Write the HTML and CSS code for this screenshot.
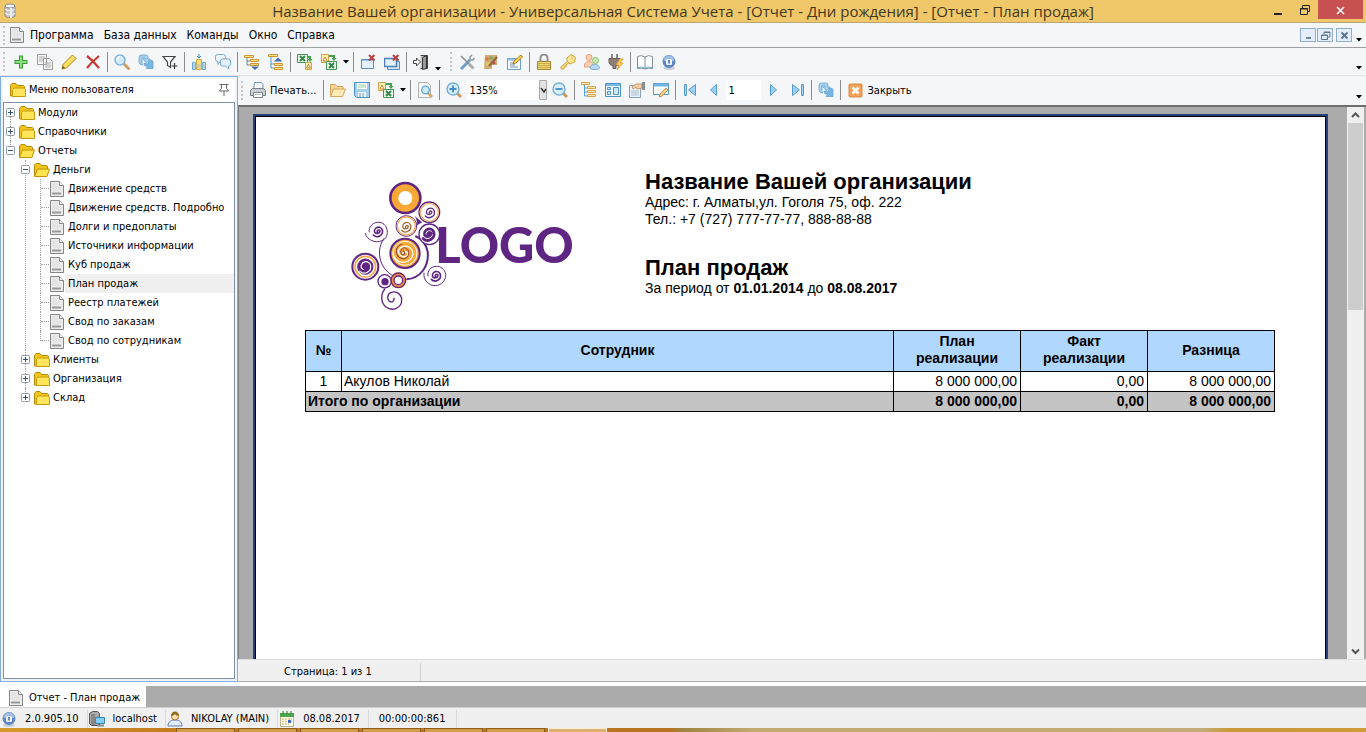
FILE: index.html
```html
<!DOCTYPE html>
<html lang="ru">
<head>
    <meta charset="utf-8" />
    <meta name="viewport" content="width=device-width, initial-scale=1" />
    <title>Отчет - План продаж</title>
    <link rel="stylesheet" href="styles.css">
</head>
<body>
    <svg class="sprite" aria-hidden="true">
        <symbol id="db" viewBox="0 0 16 16"><path d="M3 3v10c1 2 9 2 10 0V3z" fill="#c9c9cd" stroke="#8b8b90"/><ellipse cx="8" cy="3" rx="5" ry="2" fill="#f4f4f6" stroke="#8b8b90"/><path d="M3 6c1 2 9 2 10 0M3 10c1 2 9 2 10 0" fill="none" stroke="#fff"/><path d="M9 5v10" stroke="#eee" stroke-width="2"/></symbol>
        <symbol id="doc" viewBox="0 0 16 16"><path d="M1.500.500h9l4 4v11h-13z" fill="#ededed" stroke="#858585"/><path d="M10.500.500v4h4" fill="#fff" stroke="#858585"/><path d="M3 3h6M3 5h6M3 7h9M3 9h9" stroke="#dcdcdc"/><path d="M3 12.500h9" stroke="#999" stroke-width="2"/></symbol>
        <symbol id="folder" viewBox="0 0 16 16"><path d="M.5 14V3.500l1.500-2h4l1.500 2h6l1 1V14z" fill="#f3c51c" stroke="#b38a08"/><path d="M2.500 14.500V7.500l1.500-1.500h10l1.500 1v7.500z" fill="#ffe55c" stroke="#c79a0c"/></symbol>
        <symbol id="folder-open" viewBox="0 0 16 16"><path d="M.5 14V3l1.500-1.500h4l1.500 2h5l1 1V8" fill="#f3c51c" stroke="#b38a08"/><path d="M.5 14.500l3-7.500h12l-2.500 7.500z" fill="#ffe34f" stroke="#c0930a"/></symbol>
        <symbol id="plus" viewBox="0 0 16 16"><path d="M8 1.500v13M1.500 8h13" stroke="#3a9a35" stroke-width="4"/><path d="M8 2.500v11M2.500 8h11" stroke="#8be07c" stroke-width="2"/></symbol>
        <symbol id="copy" viewBox="0 0 16 16"><path d="M.5.500h9v10h-9zM6.500 4.500h6l3 3v8h-9z" fill="#f8f8f8" stroke="#9b9b9b"/><path d="M2 3h6M2 5h4M2 7h4M8 9h6M8 11h6M8 13h6" stroke="#a9a9a9"/></symbol>
        <symbol id="pencil" viewBox="0 0 16 16"><path d="M1 15l1-4.500L11.500 1 15 4.500 5.500 14z" fill="#ffd84e" stroke="#b08a28"/><path d="M3.500 12L13 2.500" stroke="#fff2b0"/><path d="M1 15l1-3 2 2z" fill="#555"/></symbol>
        <symbol id="cross" viewBox="0 0 16 16"><path d="M2 2c4 3 8 7 12 12M14 2C9 6 5 10 2 14" fill="none" stroke="#c33a36" stroke-width="2.200"/></symbol>
        <symbol id="search" viewBox="0 0 16 16"><path d="M9.500 9.500l5 5" stroke="#cf9e62" stroke-width="3" stroke-linecap="round"/><circle cx="6" cy="6" r="5" fill="#d3ecfb" stroke="#7fb4dc" stroke-width="1.500"/><path d="M3 6a3 3 0 013-3" fill="none" stroke="#fff" stroke-width="1.500"/></symbol>
        <symbol id="refresh" viewBox="0 0 16 16"><path d="M1 8V3.500Q1 1 3.500 1H8q2 0 2 2v2h2L8.500 9 5 5h2V4H4v4q0 2 1 3-4 0-4-3z" fill="#a5d0ef" stroke="#67a5d4" stroke-width=".8"/><path d="M15 8v6.500H8L10 12H7l-1-3 4 1 1-3 1-1q3 0 3 2z" fill="#78b6e3" stroke="#67a5d4" stroke-width=".8"/></symbol>
        <symbol id="filter" viewBox="0 0 16 16"><path d="M1 2.500h12L8.500 8v5.500l-3-2V8z" fill="#fff" stroke="#444" stroke-width="1.200"/><path d="M12.500 9v6M9.500 12h6" stroke="#333" stroke-width="1.200"/></symbol>
        <symbol id="columns" viewBox="0 0 16 16"><path d="M1.500 8.500h3v7h-3zM11.500 8.500h3v7h-3z" fill="#c6e4f8" stroke="#69a5cf"/><path d="M5.500 5.500h5v10h-5z" fill="#ffe07a" stroke="#d0a83c"/><path d="M2 11h12M2 13h12" stroke="#a5bcca"/><path d="M8 0v4M6 2l2 2 2-2" fill="none" stroke="#3b89c4"/></symbol>
        <symbol id="chat" viewBox="0 0 16 16"><path d="M.5 2.500q0-2 2-2h6q2 0 2 2v3q0 2-2 2H5l-2 3v-3q-2.500 0-2.500-2z" fill="#edf6fc" stroke="#79a9cb"/><path d="M5.500 7q0-2 2-2h6q2 0 2 2v3q0 2-2 2v3l-3-3h-3q-2 0-2-2z" fill="#e3f1fb" stroke="#79a9cb"/></symbol>
        <symbol id="expand" viewBox="0 0 16 16"><path d="M3 3v8h4M3 7h3" fill="none" stroke="#6a86a0"/><path d="M.5 1.500h9v2h-9zM6.500 5.500h8v2h-8zM6.500 9.500h8v2h-8z" fill="#ffe08b" stroke="#cc9637"/><path d="M7 12.500h8l-4 3.500z" fill="#496fae"/></symbol>
        <symbol id="collapse" viewBox="0 0 16 16"><path d="M3 3v11h3M3 10h3" fill="none" stroke="#4f9bcd"/><path d="M.5.500h9v2h-9z" fill="#ffe08b" stroke="#cc9637"/><path d="M6 7.500L10 3.500l4.500 4z" fill="#496fae"/><path d="M6.500 9.500h8v2h-8zM6.500 13.500h8v2h-8z" fill="#ffe08b" stroke="#cc9637"/></symbol>
        <symbol id="xls-out" viewBox="0 0 16 16"><path d="M.5.500h10v8h-10z" fill="#eef9ea" stroke="#46945a"/><path d="M3 2l5 5M8 2L3 7" stroke="#31854a" stroke-width="2"/><path d="M11 3h2v3" fill="none" stroke="#45a04e" stroke-width="2"/><path d="M10.500 5h5L13 8z" fill="#45a04e"/><path d="M8.500 8.500h6v7h-6z" fill="#fff1b5" stroke="#cfa349"/><path d="M9.500 14l2-4 2 4z" fill="#fff" stroke="#c88a24"/></symbol>
        <symbol id="xls-in" viewBox="0 0 16 16"><path d="M.5.500h7v8h-7z" fill="#fff1b5" stroke="#cfa349"/><path d="M2 7l2-4 2 4z" fill="#fff" stroke="#c88a24"/><path d="M8 2h5v3" fill="none" stroke="#45a04e" stroke-width="2"/><path d="M10.500 4h5L13 7z" fill="#45a04e"/><path d="M5.500 7.500h10v8h-10z" fill="#eef9ea" stroke="#46945a"/><path d="M8 9l5 5M13 9l-5 5" stroke="#31854a" stroke-width="2"/></symbol>
        <symbol id="win-close" viewBox="0 0 16 16"><path d="M1.500 5.500h12v9h-12z" fill="#e2f1fc" stroke="#5c8dbf"/><path d="M2 6.500h11" stroke="#94c3e8"/><path d="M9 1l5.500 5.500M14.500 1L9 6.500" stroke="#b83f3f" stroke-width="2"/></symbol>
        <symbol id="wins-close" viewBox="0 0 16 16"><path d="M3.500 7.500h12v8h-12z" fill="#cfe6f8" stroke="#5c8dbf"/><path d="M.5 4.500h12v8H.5z" fill="#e2f1fc" stroke="#4d7fb5" stroke-width="1.500"/><path d="M9 1l5.500 5.500M14.500 1L9 6.500" stroke="#b83f3f" stroke-width="2"/></symbol>
        <symbol id="exit" viewBox="0 0 16 16"><path d="M7.500 1.500h7v13h-7" fill="#ccc" stroke="#444"/><path d="M9.500 3.500l4-2v13l-4 1z" fill="#999" stroke="#333"/><path d="M.5 6.500h3V4l4 4-4 4V9.500h-3z" fill="#fff" stroke="#444"/></symbol>
        <symbol id="tools" viewBox="0 0 16 16"><path d="M2 15L11 6" stroke="#6f9fcb" stroke-width="3"/><path d="M11 6V3l2-2M11 6h3l1.500-2" fill="none" stroke="#8f979f" stroke-width="1.500"/><path d="M2 2l9 9" stroke="#858c94" stroke-width="1.500"/><path d="M10 10l4.500 4.500" stroke="#a8adb3" stroke-width="3"/></symbol>
        <symbol id="palette" viewBox="0 0 16 16"><path d="M2 1h12v10H9v4H1z" fill="#d0ae7c"/><circle cx="4" cy="5" r="2" fill="#da7c42"/><circle cx="8" cy="4" r="2" fill="#8fa860"/><circle cx="5" cy="10" r="2" fill="#e6cb55"/><path d="M6 12l8-9" stroke="#94603c" stroke-width="2"/><circle cx="11" cy="9" r="1.500" fill="#c0564a"/></symbol>
        <symbol id="form-edit" viewBox="0 0 16 16"><path d="M.5 4.500h13v11H.5z" fill="#f4faff" stroke="#6d9dcd"/><path d="M1 5.500h12" stroke="#8dbbe4" stroke-width="2"/><path d="M3 9h3M3 11h5M3 13h8" stroke="#7a94b4"/><path d="M6 10l1-3 7-6 1.500 2-6.500 6z" fill="#ffd44c" stroke="#a98326"/></symbol>
        <symbol id="lock" viewBox="0 0 16 16"><path d="M4.500 8V4a3.500 3.500 0 017 0v4" fill="none" stroke="#92928c" stroke-width="2"/><path d="M1.500 7.500h13v8h-13z" fill="#ecd272" stroke="#a58835"/><path d="M2 9.500h12M2 11.500h12M2 13.500h12" stroke="#d0ae48"/></symbol>
        <symbol id="key" viewBox="0 0 16 16"><path d="M8 7l-7 6v2h3v-2h2v-2l4-3z" fill="#ffe07a" stroke="#cfa23c"/><path d="M7 4l4-3.500 4.500 3-1 4.500-4.500 2-3-3z" fill="#ffe694" stroke="#cfa23c"/><circle cx="12" cy="4" r="1" fill="#fff" stroke="#cfa23c" stroke-width=".5"/></symbol>
        <symbol id="users" viewBox="0 0 16 16"><circle cx="5" cy="3.500" r="3" fill="#ffd1b2" stroke="#e8a07c"/><path d="M.5 11c0-4 8-5 9 0v2h-9z" fill="#ffd1b2" stroke="#e8a07c"/><circle cx="11.500" cy="6.500" r="3" fill="#c4e8ae" stroke="#8cc272"/><path d="M6 14c0-5 9-5 9.500 0l-2 1.500H8z" fill="#b8d8f4" stroke="#7cabd4"/></symbol>
        <symbol id="power" viewBox="0 0 16 16"><path d="M4 0v5M9 0v5" stroke="#888" stroke-width="2"/><path d="M1 4.500h11v3c0 3-2 4-4 4v3H5v-3c-3 0-4-2-4-4z" fill="#8d8079" stroke="#6d5d56"/><path d="M12 5l-4 6h3l-2 5 6-7h-3l3-4z" fill="#ffd65a" stroke="#d9962b" stroke-width=".8"/></symbol>
        <symbol id="book" viewBox="0 0 16 16"><path d="M.5 2.500q4-2 7.500.5 3.500-2.500 7.500-.5v12q-4-1-7.500.5-3.500-1.500-7.500-.5z" fill="#fff" stroke="#7f8f9b"/><path d="M8 3v12" stroke="#7f8f9b"/><path d="M1 13.500q4-1 7 .5 3-1.500 7-.5" fill="none" stroke="#70aad5"/></symbol>
        <symbol id="info" viewBox="0 0 16 16"><ellipse cx="8" cy="14" rx="6" ry="2" fill="#c9d0da"/><circle cx="8" cy="7.500" r="6.500" fill="#5d86c2"/><path d="M2.500 6a5.500 4.500 0 0111 0c-1 2-10 2-11 0z" fill="#9fbce4"/><rect x="5" y="5" width="6" height="6" rx="1.500" fill="#eef4fc"/><path d="M8 6v3.500" stroke="#41659c" stroke-width="1.500"/></symbol>
        <symbol id="printer" viewBox="0 0 16 16"><path d="M3.500 8l1-7.500h7l1.500 2V8" fill="#f4f9fd" stroke="#6f9ac0"/><path d="M.5 8.500l2-2h11l2 2v5H.5z" fill="#c9ced4" stroke="#777f88"/><path d="M3.500 10.500h9v5h-9z" fill="#fff" stroke="#7e8790"/><path d="M5 12.500h6" stroke="#b8c2ca"/></symbol>
        <symbol id="open" viewBox="0 0 16 16"><path d="M.5 13.500v-11h5l1.500 2h6V7" fill="#f8d596" stroke="#d7a55c"/><path d="M.5 14.500l3-7.500h12l-3 7.500z" fill="#ffebb8" stroke="#d7a55c"/></symbol>
        <symbol id="save" viewBox="0 0 16 16"><path d="M.5.500h15v15H2.500l-2-2z" fill="#a3d0f1" stroke="#4b93c9"/><path d="M3 1h10v6H3z" fill="#fff"/><path d="M4 3h8M4 5h8" stroke="#9accA0"/><path d="M4 10h8v5H4z" fill="#eef5fa"/><path d="M6 11v4M9 11v4" stroke="#6f9abc"/></symbol>
        <symbol id="preview" viewBox="0 0 16 16"><path d="M1.500.500h9l3 3v12h-12z" fill="#fafafa" stroke="#b4b4b4"/><path d="M11 11l4 4" stroke="#d6a768" stroke-width="2.500"/><circle cx="8.500" cy="8" r="3.800" fill="#cdebfa" stroke="#60a4d0" stroke-width="1.300"/></symbol>
        <symbol id="zoom-in" viewBox="0 0 16 16"><path d="M11 11l4 4" stroke="#c99a5e" stroke-width="3"/><circle cx="7" cy="7" r="6" fill="#d8effc" stroke="#7aafd6" stroke-width="1.500"/><path d="M7 3.500v7M3.500 7h7" stroke="#3f8ec2" stroke-width="1.800"/></symbol>
        <symbol id="zoom-out" viewBox="0 0 16 16"><path d="M11 11l4 4" stroke="#c99a5e" stroke-width="3"/><circle cx="7" cy="7" r="6" fill="#d8effc" stroke="#7aafd6" stroke-width="1.500"/><path d="M3.500 7h7" stroke="#3f8ec2" stroke-width="1.800"/></symbol>
        <symbol id="outline" viewBox="0 0 16 16"><path d="M3.500 3v11h4M4 6h3M4 10h3" fill="none" stroke="#54a2cd"/><path d="M.5.500h8v2h-8zM6.500 4.500h8v2h-8zM6.500 8.500h8v2h-8zM6.500 12.500h8v2h-8z" fill="#ffe9a8" stroke="#d7a34c"/></symbol>
        <symbol id="thumbs" viewBox="0 0 16 16"><path d="M.5 1.500h15v13H.5z" fill="#eff8fe" stroke="#4b93c9"/><path d="M1 3h14" stroke="#7cb8e4" stroke-width="2"/><path d="M2.500 5.500h3v2h-3zM2.500 9.500h3v3h-3zM8.500 5.500h5v7h-5z" fill="#cfe8f9" stroke="#5195c8"/></symbol>
        <symbol id="page-setup" viewBox="0 0 16 16"><path d="M.5 3.500h11v12H.5z" fill="#eaf2f9" stroke="#8a9eb3"/><path d="M2 9h8M2 11h8M2 13h8" stroke="#a8bbcc"/><path d="M3 5l4-3 6 0v4l-5 1-1-2-3 2z" fill="#f8d0a5" stroke="#c99a6b"/><path d="M13 0h3v8h-3z" fill="#868d96"/></symbol>
        <symbol id="page-edit" viewBox="0 0 16 16"><path d="M.5 1.500h15v11H.5z" fill="#fafdff" stroke="#559ac8"/><path d="M1 3h14" stroke="#71b5e4" stroke-width="3"/><path d="M6 15l1-3 6-6 2 2-6 6z" fill="#ffd08a" stroke="#c08f4c"/></symbol>
        <symbol id="first" viewBox="0 0 16 16"><path d="M2.500 2.500h2v11h-2zM13.500 2.500v11L6.500 8z" fill="#9ad0f4" stroke="#5a9bcb"/></symbol>
        <symbol id="prev" viewBox="0 0 16 16"><path d="M10.500 2.500v11L4.500 8z" fill="#9ad0f4" stroke="#5a9bcb"/></symbol>
        <symbol id="next" viewBox="0 0 16 16"><path d="M5.500 2.500v11l6-5.500z" fill="#9ad0f4" stroke="#5a9bcb"/></symbol>
        <symbol id="last" viewBox="0 0 16 16"><path d="M12.500 2.500h2v11h-2zM3.500 2.500v11l7-5.500z" fill="#9ad0f4" stroke="#5a9bcb"/></symbol>
        <symbol id="close-orange" viewBox="0 0 16 16"><rect x="2" y="2" width="13" height="13" rx="1" fill="#f0a058" stroke="#dc8a42"/><path d="M5.500 5.500l6 6M11.500 5.500l-6 6" stroke="#fff" stroke-width="2.500"/></symbol>
        <symbol id="pin" viewBox="0 0 12 16"><path d="M1.500 2.500h9M3.500 3v3.500L1.500 9h9l-2-2.500V3M6 9v5" fill="none" stroke="#666"/></symbol>
        <symbol id="server" viewBox="0 0 16 16"><path d="M.5 2.500l3-2h5l2 2v12h-8l-2-2z" fill="#a9a9a9" stroke="#555"/><path d="M3 3v11M5 3v11" stroke="#666"/><path d="M6.500 6.500h9v6h-9z" fill="#7fd0f5" stroke="#3884b0"/><path d="M8 14.500h7" stroke="#8a8a8a" stroke-width="2"/></symbol>
        <symbol id="user" viewBox="0 0 16 16"><path d="M1 15c0-5 4-6 7-6s7 1 7 6z" fill="#e4ecfb" stroke="#5e7fb4"/><circle cx="8" cy="5.500" r="3.500" fill="#ffe0b0" stroke="#a8762d"/><path d="M4 5c0-6 8-6 8 0-2 0-3-1-4-2-1 1-2 2-4 2z" fill="#96691f"/></symbol>
        <symbol id="calendar" viewBox="0 0 16 16"><path d="M1.500 2.500h13v13h-13z" fill="#fffef0" stroke="#b9b28a"/><path d="M1 2h14v4H1z" fill="#4ca64a"/><path d="M4 0v3M8 0v3M12 0v3" stroke="#2c7a2c"/><path d="M3 8h10M3 10.500h10M3 13h7" stroke="#d8c77c" stroke-dasharray="2 1" stroke-width="1.500"/><path d="M9 9h3v3H9z" fill="#3d6cc0"/></symbol>
        <symbol id="exp-plus" viewBox="0 0 9 9"><rect x=".5" y=".5" width="8" height="8" rx="1" fill="#fff" stroke="#8f9aa8"/><path d="M2 4.500h5M4.500 2v5" stroke="#34507e"/></symbol>
        <symbol id="exp-minus" viewBox="0 0 9 9"><rect x=".5" y=".5" width="8" height="8" rx="1" fill="#fff" stroke="#8f9aa8"/><path d="M2 4.500h5" stroke="#34507e"/></symbol>
        <symbol id="arrow" viewBox="0 0 6 4"><path d="M0 0h6L3 3.500z" fill="#000"/></symbol>
        <symbol id="min" viewBox="0 0 13 13"><path d="M4 9h5" stroke="#6d86a0" stroke-width="2"/></symbol>
        <symbol id="restore" viewBox="0 0 13 13"><path d="M5 5V3h6v5H9M2.500 6h6v4.500h-6zM5 3.500h6M2.500 6.500h6" fill="none" stroke="#5d7690"/></symbol>
        <symbol id="mdi-x" viewBox="0 0 13 13"><path d="M3.500 3.500l6 6M9.500 3.500l-6 6" stroke="#5d7690" stroke-width="2"/></symbol>
    </svg>

    <header class="titlebar">
        <svg class="icon app-icon"><use href="#db"/></svg>
        <h1>Название Вашей организации - Универсальная Система Учета - [Отчет - Дни рождения] - [Отчет - План продаж]</h1>
        <div class="window-buttons">
            <button aria-label="Свернуть"><svg width="10" height="12"><path d="M1 10h8" stroke="#222" stroke-width="2"/></svg></button>
            <button aria-label="Восстановить"><svg width="10" height="12"><path d="M.5 4.500h7v6h-7zM.5 5h7M2.500 4V1.500h7v6H8" fill="none" stroke="#222"/></svg></button>
            <button class="close" aria-label="Закрыть окно"><svg width="10" height="12"><path d="M1 3l7 7M8 3l-7 7" stroke="#fff" stroke-width="1.500"/></svg></button>
        </div>
    </header>

    <nav class="menubar">
        <span class="grip"></span>
        <svg class="icon"><use href="#doc"/></svg>
        <button>Программа</button>
        <button>База данных</button>
        <button>Команды</button>
        <button>Окно</button>
        <button>Справка</button>
        <div class="mdi-buttons">
            <button aria-label="Свернуть отчет"><svg><use href="#min"/></svg></button>
            <button aria-label="Восстановить отчет"><svg><use href="#restore"/></svg></button>
            <button class="mdi-close" aria-label="Закрыть отчет"><svg><use href="#mdi-x"/></svg></button>
        </div>
        <button class="overflow" aria-label="Настройка меню"><svg><use href="#arrow"/></svg></button>
    </nav>

    <div class="toolbar main-toolbar">
        <span class="grip"></span>
        <button class="tool" aria-label="Добавить"><svg class="icon"><use href="#plus"/></svg></button>
        <button class="tool" aria-label="Копировать"><svg class="icon"><use href="#copy"/></svg></button>
        <button class="tool" aria-label="Изменить"><svg class="icon"><use href="#pencil"/></svg></button>
        <button class="tool" aria-label="Удалить"><svg class="icon"><use href="#cross"/></svg></button>
        <span class="sep"></span>
        <button class="tool" aria-label="Поиск"><svg class="icon"><use href="#search"/></svg></button>
        <button class="tool" aria-label="Обновить"><svg class="icon"><use href="#refresh"/></svg></button>
        <button class="tool" aria-label="Фильтр"><svg class="icon"><use href="#filter"/></svg></button>
        <span class="sep"></span>
        <button class="tool" aria-label="Колонки"><svg class="icon"><use href="#columns"/></svg></button>
        <button class="tool" aria-label="Примечания"><svg class="icon"><use href="#chat"/></svg></button>
        <span class="sep"></span>
        <button class="tool" aria-label="Развернуть все"><svg class="icon"><use href="#expand"/></svg></button>
        <button class="tool" aria-label="Свернуть все"><svg class="icon"><use href="#collapse"/></svg></button>
        <span class="sep"></span>
        <button class="tool" aria-label="Импорт"><svg class="icon"><use href="#xls-out"/></svg></button>
        <button class="tool" aria-label="Экспорт"><svg class="icon"><use href="#xls-in"/></svg></button>
        <button class="drop" aria-label="Варианты экспорта"><svg><use href="#arrow"/></svg></button>
        <span class="sep"></span>
        <button class="tool" aria-label="Закрыть окно отчета"><svg class="icon"><use href="#win-close"/></svg></button>
        <button class="tool" aria-label="Закрыть все окна"><svg class="icon"><use href="#wins-close"/></svg></button>
        <span class="sep"></span>
        <button class="tool" aria-label="Выход"><svg class="icon"><use href="#exit"/></svg></button>
        <button class="drop low" aria-label="Кнопки панели"><svg><use href="#arrow"/></svg></button>
        <span class="grip"></span>
        <button class="tool" aria-label="Настройки"><svg class="icon"><use href="#tools"/></svg></button>
        <button class="tool" aria-label="Оформление"><svg class="icon"><use href="#palette"/></svg></button>
        <button class="tool" aria-label="Редактор форм"><svg class="icon"><use href="#form-edit"/></svg></button>
        <span class="sep"></span>
        <button class="tool" aria-label="Блокировка"><svg class="icon"><use href="#lock"/></svg></button>
        <button class="tool" aria-label="Пароль"><svg class="icon"><use href="#key"/></svg></button>
        <button class="tool" aria-label="Пользователи"><svg class="icon"><use href="#users"/></svg></button>
        <button class="tool" aria-label="Подключения"><svg class="icon"><use href="#power"/></svg></button>
        <span class="sep"></span>
        <button class="tool" aria-label="Справочник"><svg class="icon"><use href="#book"/></svg></button>
        <button class="tool" aria-label="О программе"><svg class="icon"><use href="#info"/></svg></button>
        <button class="overflow" aria-label="Настройка панели"><svg><use href="#arrow"/></svg></button>
    </div>

    <main>
        <aside class="side-panel">
            <div class="panel-title">
                <svg class="icon"><use href="#folder"/></svg>
                <h2>Меню пользователя</h2>
                <button aria-label="Закрепить"><svg class="pin"><use href="#pin"/></svg></button>
            </div>
            <div class="tree-box">
                <ul class="tree">
                    <li><div class="row"><button class="expander" aria-label="Раскрыть Модули"><svg><use href="#exp-plus"/></svg></button><svg class="icon"><use href="#folder"/></svg><span>Модули</span></div></li>
                    <li><div class="row"><button class="expander" aria-label="Раскрыть Справочники"><svg><use href="#exp-plus"/></svg></button><svg class="icon"><use href="#folder"/></svg><span>Справочники</span></div></li>
                    <li>
                        <div class="row"><button class="expander" aria-label="Свернуть Отчеты"><svg><use href="#exp-minus"/></svg></button><svg class="icon"><use href="#folder-open"/></svg><span>Отчеты</span></div>
                        <ul>
                            <li>
                                <div class="row"><button class="expander" aria-label="Свернуть Деньги"><svg><use href="#exp-minus"/></svg></button><svg class="icon"><use href="#folder-open"/></svg><span>Деньги</span></div>
                                <ul>
                                    <li><div class="row leaf"><svg class="icon"><use href="#doc"/></svg><span>Движение средств</span></div></li>
                                    <li><div class="row leaf"><svg class="icon"><use href="#doc"/></svg><span>Движение средств. Подробно</span></div></li>
                                    <li><div class="row leaf"><svg class="icon"><use href="#doc"/></svg><span>Долги и предоплаты</span></div></li>
                                    <li><div class="row leaf"><svg class="icon"><use href="#doc"/></svg><span>Источники информации</span></div></li>
                                    <li><div class="row leaf"><svg class="icon"><use href="#doc"/></svg><span>Куб продаж</span></div></li>
                                    <li><div class="row leaf selected"><svg class="icon"><use href="#doc"/></svg><span>План продаж</span></div></li>
                                    <li><div class="row leaf"><svg class="icon"><use href="#doc"/></svg><span>Реестр платежей</span></div></li>
                                    <li><div class="row leaf"><svg class="icon"><use href="#doc"/></svg><span>Свод по заказам</span></div></li>
                                    <li><div class="row leaf"><svg class="icon"><use href="#doc"/></svg><span>Свод по сотрудникам</span></div></li>
                                </ul>
                            </li>
                            <li><div class="row"><button class="expander" aria-label="Раскрыть Клиенты"><svg><use href="#exp-plus"/></svg></button><svg class="icon"><use href="#folder"/></svg><span>Клиенты</span></div></li>
                            <li><div class="row"><button class="expander" aria-label="Раскрыть Организация"><svg><use href="#exp-plus"/></svg></button><svg class="icon"><use href="#folder"/></svg><span>Организация</span></div></li>
                            <li><div class="row"><button class="expander" aria-label="Раскрыть Склад"><svg><use href="#exp-plus"/></svg></button><svg class="icon"><use href="#folder"/></svg><span>Склад</span></div></li>
                        </ul>
                    </li>
                </ul>
            </div>
        </aside>

        <section class="report">
            <div class="toolbar report-toolbar">
                <span class="grip"></span>
                <button class="tool labeled print"><svg class="icon"><use href="#printer"/></svg>Печать...</button>
                <span class="sep"></span>
                <button class="tool" aria-label="Открыть"><svg class="icon"><use href="#open"/></svg></button>
                <button class="tool" aria-label="Сохранить"><svg class="icon"><use href="#save"/></svg></button>
                <button class="tool" aria-label="Экспорт отчета"><svg class="icon"><use href="#xls-in"/></svg></button>
                <button class="drop" aria-label="Форматы экспорта"><svg><use href="#arrow"/></svg></button>
                <span class="sep"></span>
                <button class="tool" aria-label="Найти в отчете"><svg class="icon"><use href="#preview"/></svg></button>
                <span class="sep"></span>
                <button class="tool" aria-label="Увеличить"><svg class="icon"><use href="#zoom-in"/></svg></button>
                <div class="zoom-box">
                    <select aria-label="Масштаб"><option>135%</option><option>100%</option></select>
                    <svg class="zoom-arrow" viewBox="0 0 8 20"><path d="M.5.500h7v19h-7z" fill="#e3e3e3" stroke="#a9a9a9"/><path d="M2 8l3 4 2-3" fill="none" stroke="#333" stroke-width="1.500"/></svg>
                </div>
                <button class="tool" aria-label="Уменьшить"><svg class="icon"><use href="#zoom-out"/></svg></button>
                <span class="sep"></span>
                <button class="tool" aria-label="Структура"><svg class="icon"><use href="#outline"/></svg></button>
                <button class="tool" aria-label="Миниатюры"><svg class="icon"><use href="#thumbs"/></svg></button>
                <button class="tool" aria-label="Параметры страницы"><svg class="icon"><use href="#page-setup"/></svg></button>
                <button class="tool" aria-label="Редактировать страницу"><svg class="icon"><use href="#page-edit"/></svg></button>
                <span class="sep"></span>
                <button class="tool" aria-label="Первая страница"><svg class="icon"><use href="#first"/></svg></button>
                <button class="tool" aria-label="Предыдущая страница"><svg class="icon"><use href="#prev"/></svg></button>
                <input class="page-input" type="text" value="1" aria-label="Номер страницы">
                <button class="tool" aria-label="Следующая страница"><svg class="icon"><use href="#next"/></svg></button>
                <button class="tool" aria-label="Последняя страница"><svg class="icon"><use href="#last"/></svg></button>
                <span class="sep"></span>
                <button class="tool" aria-label="Обновить отчет"><svg class="icon"><use href="#refresh"/></svg></button>
                <span class="sep"></span>
                <button class="tool labeled"><svg class="icon"><use href="#close-orange"/></svg>Закрыть</button>
                <button class="overflow" aria-label="Настройка панели отчета"><svg><use href="#arrow"/></svg></button>
            </div>

            <div class="viewer">
                <div class="canvas">
                    <article class="page">
                        <div class="page-head">
                            <svg class="logo" viewBox="0 0 750 450" role="img" aria-label="LOGO">
                                <defs>
                                    <path id="spiral" d="M-2 2a4 4 0 018-3a9 9 0 01-16 4a12 12 0 0123-7a16 16 0 01-27 15" fill="none" stroke-linecap="round"/>
                                </defs>
                                <g stroke="#5f2583" fill="none">
                                    <path d="M132 205C100 250 125 325 200 328" stroke-width="3"/>
                                    <path d="M200 328C240 325 268 290 263 245 258 220 242 205 226 198" stroke-width="6"/>
                                    <path d="M226 140q8 15 4 26l16-9z" fill="#5f2583"/>
                                    <circle cx="196" cy="84" r="45" fill="#f7a837" stroke-width="8"/>
                                    <circle cx="196" cy="84" r="21" fill="#fff" stroke="none"/>
                                    <circle cx="268" cy="127" r="31" stroke-width="4"/>
                                    <circle cx="268" cy="127" r="27" stroke="#f3b068" stroke-width="4"/>
                                    <use href="#spiral" transform="translate(270 127)" stroke-width="4"/>
                                    <circle cx="199" cy="168" r="31" stroke-width="3"/>
                                    <circle cx="199" cy="168" r="27" stroke="#f3aa58" stroke-width="4"/>
                                    <use href="#spiral" transform="translate(199 170)" stroke="#a36432" stroke-width="4"/>
                                    <circle cx="268" cy="193" r="31" fill="#fff" stroke-width="4"/>
                                    <use href="#spiral" transform="translate(266 192) scale(1.200)" stroke-width="7"/>
                                    <path d="M76 190c3 18 30 32 50 22 24-10 20-50-6-55-20-3-36 14-32 30" stroke-width="3"/>
                                    <use href="#spiral" transform="translate(114 184)" stroke-width="5"/>
                                    <circle cx="195" cy="250" r="44" fill="#f7a837" stroke-width="6"/>
                                    <circle cx="195" cy="250" r="36" stroke="#fff" stroke-width="3"/>
                                    <use href="#spiral" transform="translate(193 250) scale(1.900) rotate(40)" stroke="#fff" stroke-width="2"/>
                                    <use href="#spiral" transform="translate(190 247) scale(1.400) rotate(120)" stroke="#8a4545" stroke-width="2"/>
                                    <circle cx="76" cy="290" r="39" stroke-width="6"/>
                                    <circle cx="76" cy="290" r="31" stroke="#f4a850" stroke-width="5"/>
                                    <circle cx="76" cy="290" r="23" fill="#5f2583" stroke-width="3"/>
                                    <use href="#spiral" transform="translate(76 290) scale(1.200)" stroke="#fff" stroke-width="3"/>
                                    <circle cx="78" cy="290" r="10" fill="#5f2583" stroke="none"/>
                                    <circle cx="134" cy="334" r="20" fill="#fff" stroke-width="4"/>
                                    <circle cx="135" cy="335" r="11" fill="#5f2583" stroke="none"/>
                                    <circle cx="175" cy="331" r="22" fill="#f08f56" stroke="#6b2450" stroke-width="4"/>
                                    <circle cx="175" cy="331" r="13" fill="#fff" stroke-width="4"/>
                                    <path d="M252 308c-3 22 14 40 34 39 20-1 32-18 31-34-2-16-16-25-29-24-17 1-26 14-24 30" stroke-width="3"/>
                                    <use href="#spiral" transform="translate(288 317)" stroke-width="5"/>
                                    <path d="M135 357c-12 12-15 40 3 54 20 15 47 3 47-21 0-19-18-29-33-22-12 6-10 21-4 26 9 5 16-2 14-11" stroke-width="4"/>
                                </g>
                                <text x="286" y="278" class="logo-text">LOGO</text>
                            </svg>
                            <div class="org">
                                <h2>Название Вашей организации</h2>
                                <p>Адрес: г. Алматы,ул. Гоголя 75, оф. 222</p>
                                <p>Тел.: +7 (727) 777-77-77, 888-88-88</p>
                                <h2 class="report-name">План продаж</h2>
                                <p>За период от <b>01.01.2014</b> до <b>08.08.2017</b></p>
                            </div>
                        </div>
                        <table>
                            <colgroup><col class="c-num"><col><col class="c-sum"><col class="c-sum"><col class="c-sum"></colgroup>
                            <thead>
                                <tr><th>№</th><th>Сотрудник</th><th>План реализации</th><th>Факт реализации</th><th>Разница</th></tr>
                            </thead>
                            <tbody>
                                <tr><td class="num">1</td><td>Акулов Николай</td><td class="sum">8 000 000,00</td><td class="sum">0,00</td><td class="sum">8 000 000,00</td></tr>
                            </tbody>
                            <tfoot>
                                <tr><td colspan="2">Итого по организации</td><td class="sum">8 000 000,00</td><td class="sum">0,00</td><td class="sum">8 000 000,00</td></tr>
                            </tfoot>
                        </table>
                    </article>
                </div>
                <div class="scrollbar">
                    <button aria-label="Вверх"><svg width="9" height="7"><path d="M1 5l3.500-3.500L8 5" fill="none" stroke="#555" stroke-width="2"/></svg></button>
                    <div class="thumb"></div>
                    <button class="down" aria-label="Вниз"><svg width="9" height="7"><path d="M1 1.500L4.500 5 8 1.500" fill="none" stroke="#555" stroke-width="2"/></svg></button>
                </div>
            </div>
            <div class="page-status"><span>Страница: 1 из 1</span></div>
        </section>
    </main>

    <div class="tabs">
        <button class="tab"><svg class="icon"><use href="#doc"/></svg>Отчет - План продаж</button>
    </div>

    <footer class="statusbar">
        <span><svg class="icon"><use href="#info"/></svg>2.0.905.10</span>
        <span><svg class="icon"><use href="#server"/></svg>localhost</span>
        <span><svg class="icon"><use href="#user"/></svg>NIKOLAY (MAIN)</span>
        <span><svg class="icon"><use href="#calendar"/></svg>08.08.2017</span>
        <span class="timer">00:00:00:861</span>
    </footer>

    <div class="taskbar">
        <i></i><i></i><i></i><i></i><i></i><i></i><i class="active"></i>
    </div>
</body>
</html>
```
FILE: styles.css
```css
* {
    box-sizing: border-box;
}
html, body {
    height: 100%;
}
body {
    display: flex;
    flex-direction: column;
    margin: 0;
    overflow: hidden;
    background-color: #f5f6f8;
    color: #000;
    font-family: "DejaVu Sans Condensed", "DejaVu Sans", sans-serif;
    font-size: 11px;
}
h1, h2, p, ul {
    margin: 0;
    padding: 0;
}
ul {
    list-style: none;
}
button {
    display: flex;
    align-items: center;
    justify-content: center;
    padding: 0;
    border: 0;
    background: none;
    color: inherit;
    font: inherit;
}
.sprite {
    display: none;
}
.icon {
    flex: none;
    width: 16px;
    height: 16px;
}

/* window title */
.titlebar {
    display: flex;
    align-items: center;
    flex: none;
    height: 23px;
    padding-left: 2px;
    background-color: #f0c869;
    border-bottom: 1px solid #b9a57a;
}
.titlebar h1 {
    flex: 1;
    padding-left: 84px;
    text-align: center;
    color: #41361f;
    font-family: "Open Sans", "Noto Sans", sans-serif;
    font-size: 15px;
    font-weight: 400;
    line-height: 22px;
    white-space: nowrap;
}
.window-buttons {
    display: flex;
    align-self: flex-start;
    padding-right: 3px;
}
.window-buttons button {
    width: 27px;
    height: 19px;
}
.window-buttons .close {
    width: 45px;
    background-color: #c75050;
}

/* menu and toolbars */
.menubar {
    display: flex;
    align-items: center;
    flex: none;
    height: 25px;
    padding-left: 3px;
    border-bottom: 1px solid #a0a0a0;
    font-size: 12px;
}
.menubar > button {
    height: 20px;
    padding: 0 5px;
}
.grip {
    flex: none;
    width: 6px;
    height: 19px;
    border-left: 2px dotted #c4c4c8;
}
.mdi-buttons {
    display: flex;
    gap: 1px;
    margin-left: auto;
}
.mdi-buttons button {
    width: 16px;
    height: 14px;
    border: 1px solid #94aec8;
    background-color: #e4eefa;
}
.mdi-buttons .mdi-close {
    margin-left: 2px;
}
.mdi-buttons svg {
    width: 13px;
    height: 13px;
}
.toolbar {
    display: flex;
    align-items: center;
    flex: none;
    height: 28px;
    padding-left: 3px;
    border-bottom: 1px solid #e2e3e6;
}
.main-toolbar .drop + .grip {
    width: 5px;
    margin-left: 7px;
}
.tool {
    flex: none;
    width: 24px;
    height: 24px;
}
.labeled {
    width: auto;
    gap: 4px;
    padding: 0 4px;
}
.labeled.print {
    padding: 0 5px 0 3px;
}
.sep {
    flex: none;
    width: 1px;
    height: 20px;
    margin: 0 2px;
    background-color: #8c8c90;
}
.drop {
    flex: none;
    width: 10px;
    height: 24px;
}
.drop.low {
    align-items: flex-end;
    padding-bottom: 3px;
}
.drop svg, .overflow svg {
    flex: none;
    width: 6px;
    height: 4px;
}
.toolbar .overflow, .menubar .overflow {
    align-self: flex-end;
    align-items: flex-end;
    width: 14px;
    height: 20px;
    padding: 0 0 5px;
}
.toolbar .overflow {
    margin-left: auto;
}
.zoom-box {
    position: relative;
    flex: none;
    width: 82px;
    height: 20px;
}
.zoom-box select {
    width: 80px;
    height: 20px;
    margin-left: 1px;
    padding: 0 2px;
    border: 0;
    background-color: #fff;
    appearance: none;
    font: inherit;
}
.zoom-arrow {
    position: absolute;
    top: 0;
    right: 1px;
    width: 8px;
    height: 20px;
    pointer-events: none;
}
.page-input {
    width: 35px;
    height: 20px;
    padding: 0 2px;
    border: 0;
    background-color: #fff;
    font: inherit;
}

/* work area */
main {
    display: flex;
    flex: 1;
    min-height: 0;
}
.side-panel {
    display: flex;
    flex-direction: column;
    flex: none;
    width: 238px;
    padding: 2px;
    border: 1px solid #84aee0;
    background-color: #eef3fa;
}
.panel-title {
    display: flex;
    align-items: center;
    flex: none;
    height: 23px;
    padding: 0 5px 2px 7px;
    background-color: #fff;
}
.panel-title h2 {
    flex: 1;
    padding-left: 3px;
    font-size: 11px;
    font-weight: 400;
}
.pin {
    width: 12px;
    height: 16px;
}
.tree-box {
    flex: 1;
    min-height: 0;
    border: 1px solid #7f90a8;
    background-color: #fff;
}
.tree li {
    position: relative;
}
.tree li::before {
    content: "";
    position: absolute;
    top: 0;
    bottom: 0;
    left: 6px;
    border-left: 1px dotted #a0a0a0;
}
.tree li:last-child::before {
    bottom: auto;
    height: 10px;
}
.tree > li:first-child::before {
    top: 10px;
}
.tree ul {
    margin-left: 15px;
}
.row {
    display: flex;
    align-items: center;
    height: 19px;
}
.row span {
    flex: 1;
    padding-left: 3px;
    line-height: 19px;
    white-space: nowrap;
}
.row.leaf::before {
    content: "";
    width: 8px;
    margin-left: 7px;
    border-top: 1px dotted #a0a0a0;
}
.selected span {
    background-color: #f0f0f0;
}
.expander {
    position: relative;
    flex: none;
    justify-content: flex-start;
    width: 15px;
    height: 19px;
    padding-left: 2px;
}
.expander svg {
    width: 9px;
    height: 9px;
}

/* report */
.report {
    display: flex;
    flex-direction: column;
    flex: 1;
    min-width: 0;
}
.report-toolbar {
    height: 29px;
    padding-bottom: 1px;
    border-bottom: 0;
}
.viewer {
    display: flex;
    flex: 1;
    min-height: 0;
    border-top: 2px solid #6e6e6e;
    border-left: 1px solid #808080;
    background-color: #ababab;
}
.canvas {
    display: flex;
    flex: 1;
    min-width: 0;
    padding: 7px 19px 0 14px;
    overflow: hidden;
}
.page {
    flex: 1;
    min-height: 700px;
    margin: 2px;
    padding: 53px 50px 0 49px;
    border: 1px solid #000;
    outline: 2px solid #27417a;
    background-color: #fff;
    font-family: "Liberation Sans", Arial, sans-serif;
    font-size: 14px;
}
.page-head {
    display: flex;
    padding-left: 35px;
}
.logo {
    flex: none;
    width: 250px;
    height: 150px;
}
.logo-text {
    fill: #5f2583;
    font-family: Lato, sans-serif;
    font-size: 146px;
    font-weight: 900;
}
.org {
    padding-left: 55px;
}
.org h2 {
    font-size: 22px;
    line-height: 24px;
}
.org .report-name {
    margin-top: 28px;
}
.org p {
    line-height: 17px;
}
table {
    width: 100%;
    margin-top: 10px;
    border-collapse: collapse;
    table-layout: fixed;
}
.c-num {
    width: 36px;
}
.c-sum {
    width: 127px;
}
th, td {
    height: 20px;
    padding: 0 2px;
    border: 1px solid #000;
    line-height: 17px;
    text-align: left;
}
th {
    height: 41px;
    padding: 0 16px 2px;
    background-color: #b0d8ff;
    text-align: center;
}
th:first-child {
    padding: 0 0 2px;
}
.num {
    text-align: center;
}
.sum {
    padding-right: 3px;
    text-align: right;
}
tfoot td {
    background-color: #c4c4c4;
    font-weight: 700;
}
.scrollbar {
    display: flex;
    flex-direction: column;
    flex: none;
    width: 17px;
    margin-right: 2px;
    background-color: #f0f0f0;
}
.scrollbar button {
    height: 16px;
}
.scrollbar .thumb {
    height: 187px;
    margin: 0 1px;
    background-color: #cdcdcd;
}
.scrollbar .down {
    margin-top: auto;
}
.page-status {
    display: flex;
    align-items: center;
    flex: none;
    height: 23px;
    padding: 4px 0 1px;
    border-top: 1px solid #dcdcdc;
    border-bottom: 1px solid #a9a9a9;
    background-color: #f0f0f0;
}
.page-status span {
    width: 183px;
    padding-left: 46px;
    border-right: 1px solid #d0d0d0;
    line-height: 18px;
}

/* bottom bars */
.tabs {
    display: flex;
    flex: none;
    height: 26px;
    border-top: 4px solid #fff;
    border-bottom: 1px solid #d0d0d0;
    background-color: #ababab;
}
.tab {
    gap: 5px;
    padding: 2px 6px 0 8px;
    background-color: #fff;
}
.statusbar {
    display: flex;
    align-items: center;
    flex: none;
    height: 20px;
    padding-top: 1px;
    background-color: #f0f0f0;
}
.statusbar span {
    display: flex;
    align-items: center;
    gap: 8px;
    height: 18px;
    padding: 0 8px 0 1px;
    border-right: 1px solid #dadada;
}
.statusbar .timer {
    padding: 0 11px 0 10px;
}
.taskbar {
    display: flex;
    gap: 3px;
    flex: none;
    height: 4px;
    padding-left: 176px;
    background: linear-gradient(to right, #d59a2c, #c47a1e 13%, #b87420 49%, #a08440 50%, #c0aa70 55%, #c4ac78 88%, #c89a38 90%, #cf9a38);
}
.taskbar i {
    width: 59px;
    border: 1px solid #8a5a16;
    border-bottom: 0;
    background-color: #d39c46;
}
.taskbar .active {
    border-color: #fff2d4;
    background-color: #e0b070;
}
```
